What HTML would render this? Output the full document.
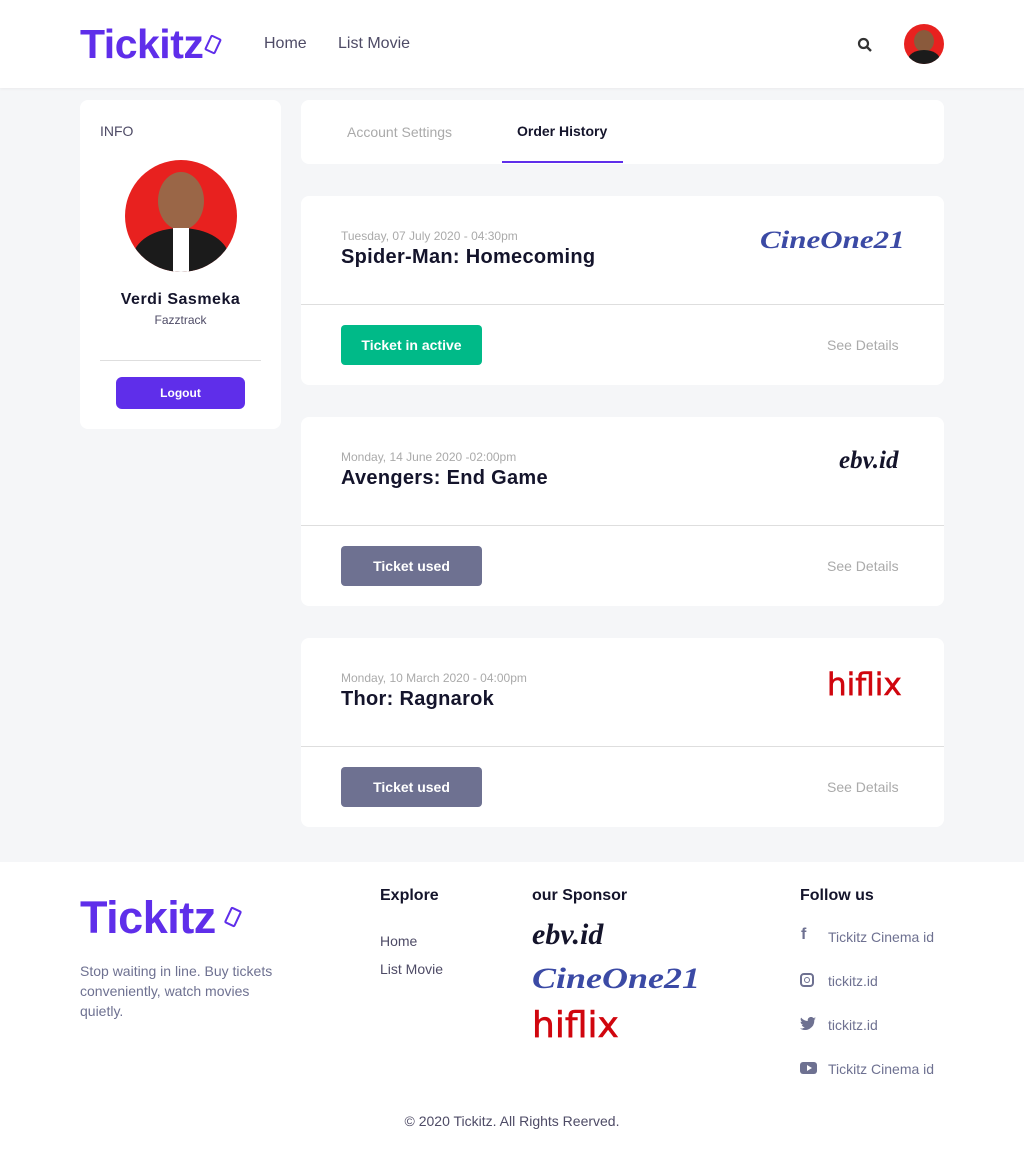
<!DOCTYPE html>
<html><head><meta charset="utf-8"><style>
*{box-sizing:border-box;margin:0;padding:0}
body{width:1024px;height:1151px;background:#f5f6f8;font-family:"Liberation Sans",sans-serif;position:relative;overflow:hidden;color:#14142b}
.a{position:absolute}
.card{position:absolute;background:#fff;border-radius:8px}
.logo{font-weight:bold;color:#5f2eea;letter-spacing:-.5px}
.avatar{border-radius:50%;background:#e8211f;overflow:hidden;position:absolute}
.sd{color:#aaa;font-size:14px}
.btn{position:absolute;color:#fff;font-weight:bold;font-size:14px;text-align:center;border-radius:4px;line-height:40px;width:141px;height:40px}
.f{font-size:14px;color:#6e7191}
.cine{font-weight:bold;color:#3b4aa5;font-family:'Liberation Serif',serif;font-style:italic;transform-origin:left top;white-space:nowrap}
.hf{color:#d0060e;font-family:'DejaVu Sans',sans-serif;transform-origin:left top;white-space:nowrap;-webkit-text-stroke:.6px #d0060e}
</style></head><body>
<div class="a" style="left:0;top:0;width:1024px;height:88px;background:#fff;box-shadow:0 1px 3px rgba(0,0,0,.05)"></div>
<div class="a logo" style="left:80px;top:21px;font-size:41px">Tickitz</div>
<div class="a" style="left:207px;top:36px;width:12px;height:17px;border:2px solid #5f2eea;transform:rotate(25deg);border-radius:2px"></div>
<div class="a" style="left:264px;top:35px;font-size:16px;color:#4e4b66">Home</div>
<div class="a" style="left:338px;top:35px;font-size:16px;color:#4e4b66">List Movie</div>
<svg class="a" style="left:857px;top:37px" width="16" height="16" viewBox="0 0 16 16"><circle cx="6.5" cy="6.5" r="4.5" fill="none" stroke="#333" stroke-width="2.2"/><path d="M10 10l4 4" stroke="#333" stroke-width="2.4"/></svg>
<div class="avatar" style="left:904px;top:24px;width:40px;height:40px"><div class="a" style="left:10px;top:6px;width:20px;height:22px;border-radius:50%;background:#8a5a3c"></div><div class="a" style="left:4px;top:26px;width:32px;height:20px;border-radius:50% 50% 0 0;background:#1b1b1b"></div></div>

<div class="card" style="left:80px;top:100px;width:201px;height:329px">
<div class="a" style="left:20px;top:23px;font-size:14px;color:#4e4b66">INFO</div>
<div class="avatar" style="left:45px;top:60px;width:112px;height:112px"><div class="a" style="left:33px;top:12px;width:46px;height:58px;border-radius:50%;background:#9a6647"></div><div class="a" style="left:8px;top:68px;width:96px;height:60px;border-radius:50% 50% 0 0;background:#1b1b1b"></div><div class="a" style="left:48px;top:68px;width:16px;height:44px;background:#fff"></div></div>
<div class="a" style="left:0;width:201px;top:191px;text-align:center;font-size:16px;font-weight:bold;letter-spacing:.5px">Verdi Sasmeka</div>
<div class="a" style="left:0;width:201px;top:213px;text-align:center;font-size:12px;color:#4e4b66">Fazztrack</div>
<div class="a" style="left:20px;top:260px;width:161px;height:1px;background:#dedede"></div>
<div class="a" style="left:36px;top:277px;width:129px;height:32px;border-radius:6px;background:#5f2eea;color:#fff;font-size:12px;font-weight:bold;text-align:center;line-height:32px">Logout</div>
</div>

<div class="card" style="left:301px;top:100px;width:643px;height:64px">
<div class="a" style="left:46px;top:24px;font-size:14px;color:#aaa">Account Settings</div>
<div class="a" style="left:216px;top:23px;font-size:14px;font-weight:bold">Order History</div>
<div class="a" style="left:201px;top:61px;width:121px;height:2px;background:#5f2eea"></div>
</div>

<div class="card" style="left:301px;top:196px;width:643px;height:189px">
<div class="a" style="left:40px;top:33px;font-size:12px;color:#aaa">Tuesday, 07 July 2020 - 04:30pm</div>
<div class="a" style="left:40px;top:50px;font-size:20px;font-weight:bold;letter-spacing:.3px">Spider-Man: Homecoming</div>
<div class="a cine" style="left:459px;top:31px;font-size:25px;transform:scaleX(1.24)">CineOne21</div>
<div class="a" style="left:0;top:108px;width:643px;height:1px;background:#dedede"></div>
<div class="btn" style="left:40px;top:129px;background:#00ba88">Ticket in active</div>
<div class="a sd" style="left:526px;top:141px">See Details</div>
</div>

<div class="card" style="left:301px;top:417px;width:643px;height:189px">
<div class="a" style="left:40px;top:33px;font-size:12px;color:#aaa">Monday, 14 June 2020 -02:00pm</div>
<div class="a" style="left:40px;top:50px;font-size:20px;font-weight:bold;letter-spacing:.3px">Avengers: End Game</div>
<div class="a" style="left:538px;top:30px;font-size:25px;font-weight:bold;font-style:italic;font-family:'Liberation Serif',serif">ebv.id</div>
<div class="a" style="left:0;top:108px;width:643px;height:1px;background:#dedede"></div>
<div class="btn" style="left:40px;top:129px;background:#6e7191">Ticket used</div>
<div class="a sd" style="left:526px;top:141px">See Details</div>
</div>

<div class="card" style="left:301px;top:638px;width:643px;height:189px">
<div class="a" style="left:40px;top:33px;font-size:12px;color:#aaa">Monday, 10 March 2020 - 04:00pm</div>
<div class="a" style="left:40px;top:50px;font-size:20px;font-weight:bold;letter-spacing:.3px">Thor: Ragnarok</div>
<div class="a hf" style="left:526px;top:29px;font-size:31px">hiflix</div>
<div class="a" style="left:0;top:108px;width:643px;height:1px;background:#dedede"></div>
<div class="btn" style="left:40px;top:129px;background:#6e7191">Ticket used</div>
<div class="a sd" style="left:526px;top:141px">See Details</div>
</div>

<div class="a" style="left:0;top:862px;width:1024px;height:289px;background:#fff"></div>
<div class="a logo" style="left:80px;top:892px;font-size:45px">Tickitz</div>
<div class="a" style="left:227px;top:908px;width:12px;height:18px;border:2px solid #5f2eea;transform:rotate(25deg);border-radius:2px"></div>
<div class="a f" style="left:80px;top:961px;width:215px;line-height:20px">Stop waiting in line. Buy tickets conveniently, watch movies quietly.</div>
<div class="a" style="left:380px;top:887px;font-size:16px;font-weight:bold">Explore</div>
<div class="a f" style="left:380px;top:933px;color:#4e4b66">Home</div>
<div class="a f" style="left:380px;top:961px;color:#4e4b66">List Movie</div>
<div class="a" style="left:532px;top:887px;font-size:16px;font-weight:bold">our Sponsor</div>
<div class="a" style="left:532px;top:918px;font-size:30px;font-weight:bold;font-style:italic;font-family:'Liberation Serif',serif">ebv.id</div>
<div class="a cine" style="left:532px;top:962px;font-size:30px;transform:scaleX(1.2)">CineOne21</div>
<div class="a hf" style="left:532px;top:1005px;font-size:36px">hiflix</div>
<div class="a" style="left:800px;top:887px;font-size:16px;font-weight:bold">Follow us</div>
<div class="a" style="left:801px;top:926px;font-size:16px;font-weight:bold;color:#6e7191">f</div>
<div class="a f" style="left:828px;top:929px">Tickitz Cinema id</div>
<div class="a" style="left:800px;top:973px;width:14px;height:14px;border:2px solid #6e7191;border-radius:4px"><div class="a" style="left:2px;top:2px;width:6px;height:6px;border:1.5px solid #6e7191;border-radius:50%"></div></div>
<div class="a f" style="left:828px;top:973px">tickitz.id</div>
<svg class="a" style="left:800px;top:1017px" width="16" height="13" viewBox="0 0 16 13"><path d="M16 1.5c-.6.3-1.2.4-1.9.5.7-.4 1.2-1 1.4-1.8-.6.4-1.3.6-2.1.8A3.3 3.3 0 0 0 7.8 4 9.3 9.3 0 0 1 1.1.6a3.3 3.3 0 0 0 1 4.4c-.5 0-1-.2-1.5-.4 0 1.6 1.1 2.9 2.6 3.2-.5.1-1 .2-1.5.1.4 1.3 1.6 2.3 3.1 2.3A6.6 6.6 0 0 1 0 11.5 9.3 9.3 0 0 0 14.3 3.2V2.8c.7-.4 1.2-.9 1.7-1.3z" fill="#6e7191"/></svg>
<div class="a f" style="left:828px;top:1017px">tickitz.id</div>
<div class="a" style="left:800px;top:1062px;width:17px;height:12px;background:#6e7191;border-radius:3px"><div class="a" style="left:7px;top:3px;border-left:5px solid #fff;border-top:3px solid transparent;border-bottom:3px solid transparent"></div></div>
<div class="a f" style="left:828px;top:1061px">Tickitz Cinema id</div>
<div class="a f" style="left:0;width:1024px;top:1113px;text-align:center;color:#4e4b66">© 2020 Tickitz. All Rights Reerved.</div>
</body></html>
